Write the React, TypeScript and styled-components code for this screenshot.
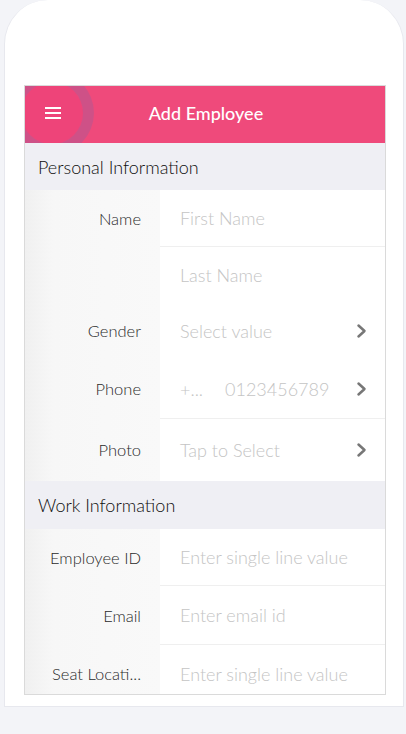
import React from "react";
import styled, { createGlobalStyle } from "styled-components";

const Global = createGlobalStyle`
  html, body { margin: 0; padding: 0; background: #f3f4f8; }
  body { font-family: Lato, "Open Sans", sans-serif; -webkit-font-smoothing: antialiased; }
`;

const Page = styled.div`
  width: 406px;
  height: 734px;
  overflow: hidden;
  background: #f3f4f8;
`;

const Frame = styled.div`
  margin-left: 4px;
  width: 400px;
  height: 707px;
  box-sizing: border-box;
  background: #ffffff;
  border: 1px solid #e7e8ee;
  border-top: none;
  border-radius: 44px 44px 0 0;
  padding: 85px 0 0 19px;
`;

const Card = styled.div`
  width: 362px;
  height: 610px;
  box-sizing: border-box;
  border: 1px solid #dadada;
  overflow: hidden;
  background: #fff;
`;

const Header = styled.div`
  position: relative;
  height: 57px;
  background: #ef4a7b;
  display: flex;
  align-items: center;
  justify-content: center;
  overflow: hidden;
`;

const Ripple = styled.div`
  position: absolute;
  left: -15px;
  top: -15px;
  width: 84px;
  height: 84px;
  border-radius: 50%;
  box-sizing: border-box;
  border: 11px solid rgba(150, 110, 160, 0.35);
  background: rgba(236, 64, 120, 0.55);
`;

const MenuButton = styled.div`
  position: absolute;
  left: 20px;
  top: 21px;
  width: 16px;
  height: 12px;
  display: flex;
  flex-direction: column;
  justify-content: space-between;
`;

const MenuLine = styled.span`
  display: block;
  height: 2px;
  background: #ffffff;
`;

const Title = styled.div`
  color: #ffffff;
  font-size: 18px;
  font-weight: 500;
  margin-top: -4px;
  margin-left: 2px;
`;

const Section = styled.div<{ $h: number }>`
  height: ${(p) => p.$h}px;
  background: #efeff4;
  display: flex;
  align-items: center;
  padding-left: 13px;
  font-size: 18px;
  font-weight: 300;
  color: #0e0e0e;
`;

const Row = styled.div<{ $h: number }>`
  display: flex;
  height: ${(p) => p.$h}px;
`;

const Label = styled.div`
  width: 135px;
  flex-shrink: 0;
  box-sizing: border-box;
  padding-right: 19px;
  display: flex;
  align-items: center;
  justify-content: flex-end;
  font-size: 16.5px;
  font-weight: 300;
  color: #2a2a2a;
  background: linear-gradient(to right, #f0f0f0 0px, #f7f7f7 28px, #f9f9f9 100%);
`;

const Field = styled.div<{ $divider?: boolean }>`
  flex: 1;
  display: flex;
  align-items: center;
  box-sizing: border-box;
  padding: 0 18px 0 20px;
  border-bottom: ${(p) => (p.$divider ? "1px solid #efefef" : "none")};
  font-size: 18px;
  font-weight: 300;
  color: #c4c4c4;
`;

const Placeholder = styled.span`
  flex: 1;
  white-space: nowrap;
`;

const Code = styled.span`
  width: 45px;
  flex-shrink: 0;
`;

const Chevron = () => (
  <svg width="11" height="16" viewBox="0 0 11 16">
    <polyline points="2.5,2.5 8.5,8 2.5,13.5" fill="none" stroke="#777" strokeWidth="2.5" strokeLinecap="round" strokeLinejoin="round" />
  </svg>
);

export default function App() {
  return (
    <Page>
      <Global />
      <Frame>
        <Card>
          <Header>
            <Ripple />
            <MenuButton>
              <MenuLine />
              <MenuLine />
              <MenuLine />
            </MenuButton>
            <Title>Add Employee</Title>
          </Header>
          <Section $h={47}>Personal Information</Section>
          <Row $h={57}>
            <Label>Name</Label>
            <Field $divider>
              <Placeholder>First Name</Placeholder>
            </Field>
          </Row>
          <Row $h={56}>
            <Label />
            <Field>
              <Placeholder>Last Name</Placeholder>
            </Field>
          </Row>
          <Row $h={56}>
            <Label>Gender</Label>
            <Field>
              <Placeholder>Select value</Placeholder>
              <Chevron />
            </Field>
          </Row>
          <Row $h={60}>
            <Label>Phone</Label>
            <Field $divider>
              <Code>+...</Code>
              <Placeholder>0123456789</Placeholder>
              <Chevron />
            </Field>
          </Row>
          <Row $h={62}>
            <Label>Photo</Label>
            <Field>
              <Placeholder>Tap to Select</Placeholder>
              <Chevron />
            </Field>
          </Row>
          <Section $h={48}>Work Information</Section>
          <Row $h={57}>
            <Label>Employee ID</Label>
            <Field $divider>
              <Placeholder>Enter single line value</Placeholder>
            </Field>
          </Row>
          <Row $h={59}>
            <Label>Email</Label>
            <Field $divider>
              <Placeholder>Enter email id</Placeholder>
            </Field>
          </Row>
          <Row $h={58}>
            <Label>Seat Locati...</Label>
            <Field>
              <Placeholder>Enter single line value</Placeholder>
            </Field>
          </Row>
        </Card>
      </Frame>
    </Page>
  );
}
